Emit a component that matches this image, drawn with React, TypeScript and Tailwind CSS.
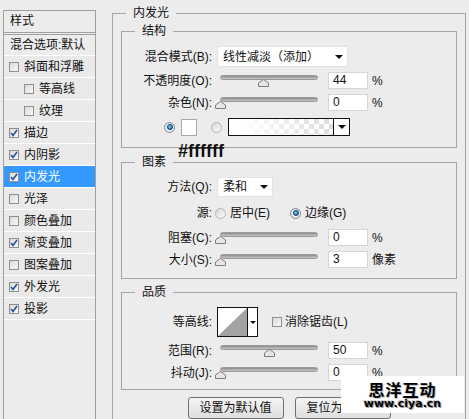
import type { ReactNode } from "react";

const styleItems: Array<{ label: string; checked?: boolean; indent?: boolean; active?: boolean }> = [
  { label: "斜面和浮雕" },
  { label: "等高线", indent: true },
  { label: "纹理", indent: true },
  { label: "描边", checked: true },
  { label: "内阴影", checked: true },
  { label: "内发光", checked: true, active: true },
  { label: "光泽" },
  { label: "颜色叠加" },
  { label: "渐变叠加", checked: true },
  { label: "图案叠加" },
  { label: "外发光", checked: true },
  { label: "投影", checked: true },
];

function CheckBox({ checked = false }: { checked?: boolean }) {
  return (
    <span className="flex h-[10px] w-[10px] shrink-0 items-center justify-center border border-[#8f8f8f] bg-[linear-gradient(135deg,#dcdcdc,#f7f7f7)]">
      {checked ? (
        <svg width="8" height="8" viewBox="0 0 8 8">
          <path d="M1 4 L3 6.5 L7 1" fill="none" stroke="#2a4f9e" strokeWidth="1.6" />
        </svg>
      ) : null}
    </span>
  );
}

function Radio({ on = false }: { on?: boolean }) {
  return (
    <span
      className={`flex h-[11px] w-[11px] shrink-0 items-center justify-center rounded-full border ${
        on ? "border-[#7d8a96] bg-[#e4eaf0]" : "border-[#b4b4b4] bg-[linear-gradient(135deg,#d8d8d8,#fbfbfb)]"
      }`}
    >
      {on ? <span className="h-[6px] w-[6px] rounded-full border border-[#0d3d66] bg-[radial-gradient(circle_at_35%_35%,#7cc4f0,#1a6ea8)]" /> : null}
    </span>
  );
}

function Arrow() {
  return (
    <svg width="8" height="4" viewBox="0 0 8 4" className="shrink-0">
      <path d="M0 0 H8 L4 4 Z" fill="#111" />
    </svg>
  );
}

function Slider({ value }: { value: number }) {
  return (
    <div className="relative ml-[8px] h-[17px] w-[98px] shrink-0">
      <div className="absolute left-0 right-0 top-[3px] h-[5px] rounded-full border border-[#9a9a9a] bg-[linear-gradient(#8c8c8c,#c8c8c8)]" />
      <svg
        width="11"
        height="8"
        viewBox="0 0 11 8"
        className="absolute top-[7px]"
        style={{ left: Math.round((value / 100) * 98) - 5 }}
      >
        <path d="M5.5 0.5 L10.5 4 V7.5 H0.5 V4 Z" fill="#e6e6e6" stroke="#7e7e7e" />
      </svg>
    </div>
  );
}

function NumBox({ value }: { value: string }) {
  return (
    <div className="ml-[10px] h-[17px] w-[40px] shrink-0 border border-[#d6d6d6] bg-white pl-[4px] text-[12px] leading-[15px]">
      {value}
    </div>
  );
}

function Label({ children }: { children: ReactNode }) {
  return <span className="w-[90px] shrink-0 text-right">{children}</span>;
}

function Group({ title, className = "", children }: { title: string; className?: string; children: ReactNode }) {
  return (
    <fieldset className={`relative border border-[#a5a5a5] ${className}`}>
      <legend className="ml-[13px] px-[7px] text-[12px] leading-[16px]">{title}</legend>
      {children}
    </fieldset>
  );
}

function Button({ children }: { children: ReactNode }) {
  return (
    <div className="flex h-[22px] w-[96px] items-center justify-center rounded-[3px] border border-[#707070] bg-[linear-gradient(#f4f4f4,#dedede)] text-[12px]">
      {children}
    </div>
  );
}

export default function App() {
  return (
    <div className="relative flex h-[419px] w-[469px] overflow-hidden bg-[#ececec] font-['Liberation_Sans','Noto_Sans_CJK_SC',sans-serif] text-[12px] leading-[16px] text-[#111]">
      {/* style list */}
      <div className="ml-[3px] mt-[10px] h-[420px] w-[93px] shrink-0 border-x border-t border-[#a0a0a0]">
        <div className="flex h-[24px] items-start border-b-[3px] border-double border-[#a0a0a0] pl-[6px] pt-[2px]">样式</div>
        <div className="flex h-[21px] items-center border-b border-white pl-[6px]">混合选项:默认</div>
        {styleItems.map((item) => (
          <div
            key={item.label}
            className={`flex h-[22px] items-center border-b border-white ${item.indent ? "pl-[20px]" : "pl-[5px]"} ${
              item.active ? "bg-[#3399ff] text-white" : "bg-[#eaeaea]"
            }`}
          >
            <CheckBox checked={item.checked} />
            <span className="ml-[5px]">{item.label}</span>
          </div>
        ))}
      </div>

      <Group title="内发光" className="ml-[16px] mt-[5px] h-[440px] w-[354px] shrink-0">
        <Group title="结构" className="mx-[8px] mt-[2px] pb-[11px]">
          <div className="mt-[7px] flex h-[21px] items-center">
            <Label>混合模式(B):</Label>
            <div className="ml-[5px] flex h-[21px] w-[131px] items-center justify-between border border-[#e2e2e2] bg-white pl-[5px] pr-[4px]">
              <span>线性减淡（添加）</span>
              <Arrow />
            </div>
          </div>
          <div className="mt-[5px] flex h-[17px] items-center">
            <Label>不透明度(O):</Label>
            <Slider value={44} />
            <NumBox value="44" />
            <span className="ml-[4px]">%</span>
          </div>
          <div className="mt-[5px] flex h-[17px] items-center">
            <Label>杂色(N):</Label>
            <Slider value={0} />
            <NumBox value="0" />
            <span className="ml-[4px]">%</span>
          </div>
          <div className="mt-[7px] flex h-[18px] items-center pl-[42px]">
            <Radio on />
            <div className="ml-[6px] h-[17px] w-[16px] border border-[#a8a8a8] bg-white" />
            <div className="ml-[14px]">
              <Radio />
            </div>
            <div className="ml-[6px] flex h-[18px] w-[122px] border border-[#111]">
              <div className="flex-1 bg-[linear-gradient(to_right,#fff_10%,rgba(255,255,255,0)),conic-gradient(#dcdcdc_25%,#fff_0_50%,#dcdcdc_0_75%,#fff_0)] bg-[length:100%_100%,10px_10px]" />
              <div className="flex w-[16px] items-center justify-center border-l border-[#111] bg-white">
                <Arrow />
              </div>
            </div>
          </div>
          <span className="absolute left-[56px] top-[103px] text-[18px] font-bold leading-[18px] text-[#111]">#ffffff</span>
        </Group>

        <Group title="图素" className="mx-[8px] mt-[6px] pb-[10px]">
          <div className="mt-[7px] flex h-[20px] items-center">
            <Label>方法(Q):</Label>
            <div className="ml-[5px] flex h-[20px] w-[56px] items-center justify-between border border-[#e2e2e2] bg-white pl-[5px] pr-[4px]">
              <span>柔和</span>
              <Arrow />
            </div>
          </div>
          <div className="mt-[7px] flex h-[18px] items-center">
            <Label>源:</Label>
            <div className="ml-[3px]">
              <Radio />
            </div>
            <span className="ml-[4px] w-[60px]">居中(E)</span>
            <Radio on />
            <span className="ml-[4px]">边缘(G)</span>
          </div>
          <div className="mt-[7px] flex h-[17px] items-center">
            <Label>阻塞(C):</Label>
            <Slider value={0} />
            <NumBox value="0" />
            <span className="ml-[4px]">%</span>
          </div>
          <div className="mt-[5px] flex h-[17px] items-center">
            <Label>大小(S):</Label>
            <Slider value={0} />
            <NumBox value="3" />
            <span className="ml-[4px]">像素</span>
          </div>
        </Group>

        <Group title="品质" className="mx-[8px] mt-[5px] pb-[8px]">
          <div className="mt-[7px] flex h-[30px] items-center">
            <Label>等高线:</Label>
            <div className="ml-[5px] flex h-[30px] w-[41px] border border-[#111] bg-white">
              <svg width="29" height="28" viewBox="0 0 29 28" className="shrink-0">
                <path d="M0 28 L29 0 V28 Z" fill="#a3a3a3" />
              </svg>
              <div className="flex flex-1 items-center justify-center border-l border-[#111]">
                <svg width="6" height="3" viewBox="0 0 6 3">
                  <path d="M0 0 H6 L3 3 Z" fill="#111" />
                </svg>
              </div>
            </div>
            <div className="ml-[14px]">
              <CheckBox />
            </div>
            <span className="ml-[3px]">消除锯齿(L)</span>
          </div>
          <div className="mt-[5px] flex h-[17px] items-center">
            <Label>范围(R):</Label>
            <Slider value={50} />
            <NumBox value="50" />
            <span className="ml-[4px]">%</span>
          </div>
          <div className="mt-[5px] flex h-[17px] items-center">
            <Label>抖动(J):</Label>
            <Slider value={0} />
            <NumBox value="0" />
            <span className="ml-[4px]">%</span>
          </div>
        </Group>

        <div className="mt-[7px] flex justify-center gap-[11px]">
          <Button>设置为默认值</Button>
          <Button>复位为默认值</Button>
        </div>
      </Group>

      {/* site stamp */}
      <div className="absolute left-[341px] top-[376px] z-10 flex h-[37px] w-[123px] flex-col items-center bg-white pt-[5px]">
        <span className="font-['Noto_Sans_CJK_SC',sans-serif] text-[16px] font-bold leading-[17px] tracking-[1px] text-black [text-shadow:1px_1px_0_#bbb,-1px_0_0_#ddd]">
          思洋互动
        </span>
        <span className="font-['DejaVu_Sans',sans-serif] text-[11px] font-bold leading-[11px] text-black [text-shadow:1px_1px_0_#999,-1px_-1px_0_#ccc]">
          www.ciya.cn
        </span>
      </div>
    </div>
  );
}
